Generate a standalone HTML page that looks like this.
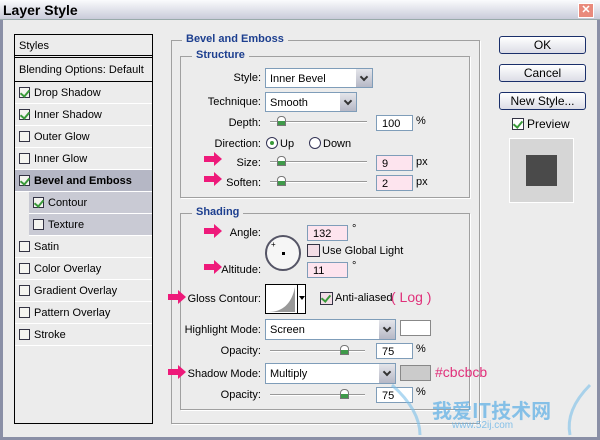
<!DOCTYPE html>
<html><head><meta charset="utf-8"><style>
*{box-sizing:border-box;margin:0;padding:0}
body{width:600px;height:440px;overflow:hidden;background:#ededed;font-family:"Liberation Sans",sans-serif;font-size:11px;color:#000;position:relative}
.a{position:absolute}
.win{left:0;top:0;width:600px;height:440px;border:3px solid #8a8fa6;border-top:none;background:#ececec}
.title{left:0;top:0;width:600px;height:20px;background:linear-gradient(#fafbfd,#c9cbd9);border-bottom:1px solid #9aa;font-weight:bold;font-size:14px;padding:2px 0 0 3px;font-family:"Liberation Sans",sans-serif}
.close{left:578px;top:3px;width:16px;height:15px;background:#e98a7c;border:1px solid #fff;color:#fff;font-size:11px;text-align:center;line-height:12px;font-weight:bold}
.list{left:14px;top:34px;width:139px;height:390px;border:1px solid #000;background:#ececec}
.row{position:absolute;left:0;width:137px;height:22px;border-bottom:1px solid #fff;line-height:22px;padding-left:19px}
.cb{position:absolute;width:11px;height:11px;border:1px solid #334;background:#f4f4f0}
.row .cb{left:4px;top:5px}
.ck::after{content:"";position:absolute;left:2px;top:0px;width:4px;height:7px;border:solid #3a9a3a;border-width:0 2px 2px 0;transform:rotate(40deg)}
.grp{border:1px solid #a0a0a0;box-shadow:1px 1px 0 #fff}
.leg{background:#ececec;color:#1d3f8f;font-weight:bold;padding:0 4px}
.lbl{text-align:right;width:110px}
.sel{background:#fff;border:1px solid #7f9db9;height:20px;padding:4px 4px;}
.dd{position:absolute;right:0;top:0;width:17px;height:18px;background:linear-gradient(#e4e5ea,#b6b8c6);border-left:1px solid #fff}
.dd::after{content:"";position:absolute;left:5px;top:5px;width:4px;height:4px;border:solid #333;border-width:0 2px 2px 0;transform:rotate(45deg)}
.inp{background:#fff;border:1px solid #7f9db9;height:16px;padding:2px 5px;}
.pk{background:#fde4ee}
.sl{height:2px;border-top:1px solid #999;border-bottom:1px solid #fff;background:#ddd}
.th{width:9px;height:10px;background:linear-gradient(#fff 50%,#3f9a4a 50%);border:1px solid #777;border-radius:4px 4px 0 0}
.btn{left:499px;width:87px;height:18px;border:1px solid #1a2f6a;border-radius:3px;background:linear-gradient(#fff,#dcdde6);text-align:center;font-size:12px;line-height:16px}
.pink{color:#e0307a}
</style></head><body>
<div class="a win"></div>
<div class="a title">Layer Style</div>
<div class="a close">✕</div>

<div class="a list">
<div class="row" style="top:0;height:23px;padding-left:4px;border-bottom:3px double #000">Styles</div>
<div class="row" style="top:24px;height:23px;padding-left:4px;border-bottom:1px solid #000">Blending Options: Default</div>
<div class="row" style="top:47px"><span class="cb ck"></span>Drop Shadow</div>
<div class="row" style="top:69px"><span class="cb ck"></span>Inner Shadow</div>
<div class="row" style="top:91px"><span class="cb"></span>Outer Glow</div>
<div class="row" style="top:113px"><span class="cb"></span>Inner Glow</div>
<div class="row" style="top:135px;background:#b5b7c5;font-weight:bold"><span class="cb ck"></span>Bevel and Emboss</div>
<div class="row" style="top:157px;left:14px;width:123px;background:#c9cad4"><span class="cb ck"></span>Contour</div>
<div class="row" style="top:179px;left:14px;width:123px;background:#c9cad4"><span class="cb"></span>Texture</div>
<div class="row" style="top:201px"><span class="cb"></span>Satin</div>
<div class="row" style="top:223px"><span class="cb"></span>Color Overlay</div>
<div class="row" style="top:245px"><span class="cb"></span>Gradient Overlay</div>
<div class="row" style="top:267px"><span class="cb"></span>Pattern Overlay</div>
<div class="row" style="top:289px"><span class="cb"></span>Stroke</div>
</div>

<div class="a grp" style="left:171px;top:40px;width:309px;height:384px"></div>
<div class="a leg" style="left:182px;top:33px">Bevel and Emboss</div>
<div class="a grp" style="left:180px;top:56px;width:290px;height:142px"></div>
<div class="a leg" style="left:192px;top:49px">Structure</div>
<div class="a grp" style="left:180px;top:213px;width:290px;height:197px"></div>
<div class="a leg" style="left:192px;top:206px">Shading</div>

<div class="a lbl" style="left:151px;top:72px">Style:</div>
<div class="a sel" style="left:265px;top:68px;width:108px">Inner Bevel<span class="dd"></span></div>
<div class="a lbl" style="left:151px;top:96px">Technique:</div>
<div class="a sel" style="left:265px;top:92px;width:92px">Smooth<span class="dd"></span></div>
<div class="a lbl" style="left:151px;top:117px">Depth:</div>
<div class="a sl" style="left:270px;top:121px;width:97px"></div><div class="a th" style="left:277px;top:116px"></div>
<div class="a inp" style="left:376px;top:115px;width:37px">100</div><div class="a" style="left:416px;top:115px">%</div>
<div class="a lbl" style="left:151px;top:138px">Direction:</div>
<div class="a" style="left:266px;top:137px;width:12px;height:12px;border:1px solid #335;border-radius:50%;background:#fff"><div style="margin:3px;width:4px;height:4px;border-radius:50%;background:#3a9a3a"></div></div>
<div class="a" style="left:280px;top:138px">Up</div>
<div class="a" style="left:309px;top:137px;width:12px;height:12px;border:1px solid #335;border-radius:50%;background:#fff"></div>
<div class="a" style="left:323px;top:138px">Down</div>
<div class="a lbl" style="left:151px;top:157px">Size:</div>
<div class="a sl" style="left:270px;top:161px;width:97px"></div><div class="a th" style="left:277px;top:156px"></div>
<div class="a inp pk" style="left:376px;top:155px;width:37px">9</div><div class="a" style="left:416px;top:156px">px</div>
<div class="a lbl" style="left:151px;top:177px">Soften:</div>
<div class="a sl" style="left:270px;top:181px;width:97px"></div><div class="a th" style="left:277px;top:176px"></div>
<div class="a inp pk" style="left:376px;top:175px;width:37px">2</div><div class="a" style="left:416px;top:176px">px</div>

<div class="a lbl" style="left:151px;top:227px">Angle:</div>
<div class="a" style="left:265px;top:235px;width:36px;height:36px;border:2px solid #556;border-radius:50%;background:#f6f6f6"><div style="position:absolute;left:15px;top:15px;width:3px;height:3px;background:#000"></div><div style="position:absolute;left:4px;top:4px;font-size:8px;line-height:8px">+</div></div>
<div class="a inp pk" style="left:307px;top:225px;width:41px">132</div><div class="a" style="left:352px;top:223px">°</div>
<div class="a cb" style="left:307px;top:244px;width:13px;height:13px;background:#f2dde6"></div>
<div class="a" style="left:322px;top:245px">Use Global Light</div>
<div class="a lbl" style="left:151px;top:264px">Altitude:</div>
<div class="a inp pk" style="left:307px;top:262px;width:41px">11</div><div class="a" style="left:352px;top:260px">°</div>
<div class="a lbl" style="left:151px;top:293px">Gloss Contour:</div>
<div class="a" style="left:265px;top:284px;width:41px;height:30px;border:1px solid #000;background:#fff">
<svg width="30" height="28" style="position:absolute;left:0;top:0"><path d="M2 27 Q24 27 29 2 L29 27 Z" fill="#999"/></svg>
<div style="position:absolute;left:31px;top:0;width:8px;height:28px;border-left:1px solid #000;background:#fff"><div style="margin:11px 0 0 1px;border:3px solid transparent;border-top:4px solid #000;width:0"></div></div></div>
<div class="a cb ck" style="left:320px;top:292px;width:13px;height:13px;background:#f2dde6"></div>
<div class="a" style="left:335px;top:292px">Anti-aliased</div>
<div class="a pink" style="left:391px;top:289px;font-size:14px">( Log )</div>
<div class="a lbl" style="left:151px;top:324px">Highlight Mode:</div>
<div class="a sel" style="left:265px;top:319px;width:131px;height:21px">Screen<span class="dd" style="height:19px"></span></div>
<div class="a" style="left:400px;top:320px;width:31px;height:16px;border:1px solid #888;background:#fff"></div>
<div class="a lbl" style="left:151px;top:345px">Opacity:</div>
<div class="a sl" style="left:270px;top:350px;width:95px"></div><div class="a th" style="left:340px;top:345px"></div>
<div class="a inp" style="left:376px;top:343px;width:37px">75</div><div class="a" style="left:416px;top:343px">%</div>
<div class="a lbl" style="left:151px;top:368px">Shadow Mode:</div>
<div class="a sel" style="left:265px;top:363px;width:131px;height:21px">Multiply<span class="dd" style="height:19px"></span></div>
<div class="a" style="left:400px;top:365px;width:31px;height:16px;border:1px solid #888;background:#cbcbcb"></div>
<div class="a pink" style="left:435px;top:364px;font-size:14px">#cbcbcb</div>
<div class="a lbl" style="left:151px;top:389px">Opacity:</div>
<div class="a sl" style="left:270px;top:394px;width:95px"></div><div class="a th" style="left:340px;top:389px"></div>
<div class="a inp" style="left:376px;top:387px;width:37px">75</div><div class="a" style="left:416px;top:386px">%</div>

<svg class="a" style="left:0;top:0" width="600" height="440">
<g fill="#ee1a7a">
<path d="M204 156h10v-4l8 7-8 7v-4h-10z"/>
<path d="M204 176h10v-4l8 7-8 7v-4h-10z"/>
<path d="M204 228h10v-4l8 7-8 7v-4h-10z"/>
<path d="M204 264h10v-4l8 7-8 7v-4h-10z"/>
<path d="M168 294h10v-4l8 7-8 7v-4h-10z"/>
<path d="M168 369h10v-4l8 7-8 7v-4h-10z"/>
</g>
<g fill="none" stroke="#7cc0ea" stroke-width="3" opacity="0.6">
<path d="M392 385 Q420 410 420 435"/><path d="M590 385 Q565 410 570 435"/>
</g>
</svg>
<div class="a" style="left:432px;top:395px;font-size:20px;font-weight:bold;color:#5aaee6;font-family:'WenQuanYi Zen Hei','Noto Sans CJK SC',sans-serif;opacity:.7">我爱IT技术网</div>
<div class="a" style="left:452px;top:420px;font-size:10px;color:#5aaee6;opacity:.7">www.52ij.com</div>

<div class="a btn" style="top:36px">OK</div>
<div class="a btn" style="top:64px">Cancel</div>
<div class="a btn" style="top:92px">New Style...</div>
<div class="a cb ck" style="left:512px;top:118px;width:12px;height:12px;background:#fff"></div>
<div class="a" style="left:527px;top:117px;font-size:12px">Preview</div>
<div class="a" style="left:509px;top:138px;width:65px;height:65px;background:#d6d6d6;border:1px solid #fff"><div style="margin:16px;width:31px;height:31px;background:#4a4a4a"></div></div>
</body></html>
